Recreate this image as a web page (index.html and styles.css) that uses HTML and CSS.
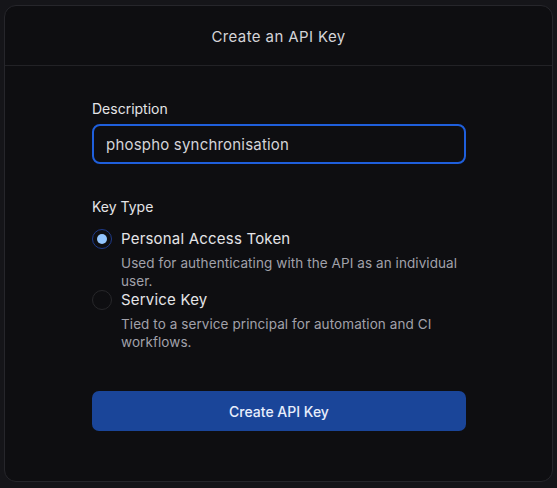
FILE: index.html
```html
<!DOCTYPE html>
<html>
<head>
<meta charset="utf-8">
<link rel="stylesheet" href="styles.css">
</head>
<body>
<div class="card">
  <div class="header">Create an API Key</div>
  <div class="body">
    <div class="field">
      <label class="label">Description</label>
      <div class="input">phospho synchronisation</div>
    </div>
    <div class="field keytype">
      <div class="label">Key Type</div>
      <div class="option">
        <span class="radio checked"><span class="dot"></span></span>
        <div class="opt-text">
          <div class="opt-title">Personal Access Token</div>
          <div class="opt-desc">Used for authenticating with the API as an individual user.</div>
        </div>
      </div>
      <div class="option">
        <span class="radio"></span>
        <div class="opt-text">
          <div class="opt-title">Service Key</div>
          <div class="opt-desc">Tied to a service principal for automation and CI workflows.</div>
        </div>
      </div>
    </div>
    <button class="btn">Create API Key</button>
  </div>
</div>
</body>
</html>
```
FILE: styles.css
```css
html, body { margin: 0; padding: 0; }
body {
  background: #151519;
  width: 557px;
  height: 488px;
  font-family: Inter, "Noto Sans", sans-serif;
  padding: 5px 4px 0 4px;
  box-sizing: border-box;
}
.card {
  background: #0e0e11;
  border: 1px solid #26262b;
  border-radius: 12px;
  height: 477px;
  box-sizing: border-box;
}
.header {
  height: 60px;
  border-bottom: 1px solid #222226;
  display: flex;
  align-items: center;
  justify-content: center;
  color: #d4d4d8;
  font-size: 15px;
  letter-spacing: 0.4px;
  padding-top: 1px;
  box-sizing: border-box;
}
.body {
  padding: 34px 86px 0 87px;
}
.label {
  display: block;
  color: #e4e4e7;
  font-size: 14px;
  line-height: 18px;
  margin-bottom: 6px;
}
.input {
  height: 40px;
  box-sizing: border-box;
  border: 2px solid #1f5fdc;
  border-radius: 8px;
  padding: 0 12px;
  display: flex;
  align-items: center;
  color: #d4d4d8;
  font-size: 15px;
  letter-spacing: 0.2px;
}
.keytype { margin-top: 34px; }
.keytype .label { margin-bottom: 14px; }
.option {
  display: flex;
  gap: 9px;
  align-items: flex-start;
}
.radio {
  width: 20px;
  height: 20px;
  box-sizing: border-box;
  border: 1.5px solid #27272a;
  border-radius: 50%;
  display: flex;
  align-items: center;
  justify-content: center;
  margin-top: -1px;
  flex: none;
}
.radio.checked { border-color: #1e3a8a; }
.dot {
  width: 10px;
  height: 10px;
  border-radius: 50%;
  background: #93c5fd;
}
.opt-title {
  color: #e4e4e7;
  font-size: 15px;
  line-height: 18px;
  letter-spacing: 0.2px;
}
.opt-desc {
  color: #a1a1aa;
  font-size: 13.5px;
  line-height: 17.5px;
  letter-spacing: 0.08px;
  margin-top: 7px;
  width: 350px;
}
.option + .option { margin-top: 1px; }
.btn {
  margin-top: 40px;
  width: 100%;
  height: 40px;
  border: none;
  border-radius: 7px;
  background: #1a4599;
  color: #e8eefc;
  font-family: Inter, "Noto Sans", sans-serif;
  font-size: 14px;
  font-weight: 500;
}
```
